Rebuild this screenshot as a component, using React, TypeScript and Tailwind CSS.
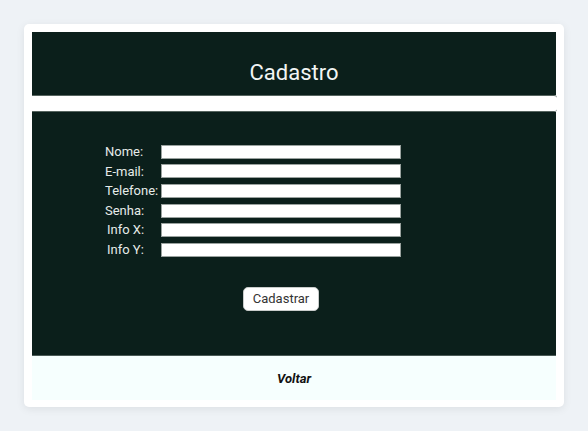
export default function App() {
    const fields = ['Nome:', 'E-mail:', 'Telefone:', 'Senha:', 'Info X:', 'Info Y:']

    return (
        <div className="min-h-screen bg-[#eef2f6] p-6 font-['Roboto',sans-serif]">
            <div className="rounded-[5px] bg-white p-2 pb-[7px] shadow-[0_2px_8px_rgba(0,0,0,0.08)]">
                {/* header */}
                <div className="h-[63px] bg-[#0b1f1b] pt-[27px] text-center">
                    <h1 className="text-[22px] leading-[28px] text-[#f2f5f4]">Cadastro</h1>
                </div>

                <div className="-mr-px h-[17px] rounded-r-[3px] border-y border-[#56645f] bg-white" />

                {/* form */}
                <div className="h-[243px] bg-[#0b1f1b] pl-[73px] pt-[30px]">
                    <div className="flex flex-col">
                        {fields.map((f) => (
                            <div key={f} className="flex h-[19.6px] items-center">
                                <label
                                    className={
                                        f.startsWith('Info')
                                            ? 'w-[56px] pl-[2px] text-[13px] leading-[19.5px] text-[#e6ebe9]'
                                            : 'w-[56px] text-[13px] leading-[19.5px] text-[#e6ebe9]'
                                    }
                                >
                                    {f}
                                </label>
                                <input className="h-[14px] w-[240px] border border-[#9aa29f] bg-white outline-none" />
                            </div>
                        ))}
                    </div>

                    <button className="ml-[138px] mt-[27px] h-[24px] w-[76px] rounded-[5px] border border-[#c9cccb] bg-white text-[13px] text-[#333]">
                        Cadastrar
                    </button>
                </div>

                {/* footer */}
                <div className="flex h-[45px] items-center justify-center border-t border-[#4a5a56] bg-[#f6fffe] pt-[2px]">
                    <span className="text-[13px] font-bold italic text-[#111]">Voltar</span>
                </div>
            </div>
        </div>
    )
}
